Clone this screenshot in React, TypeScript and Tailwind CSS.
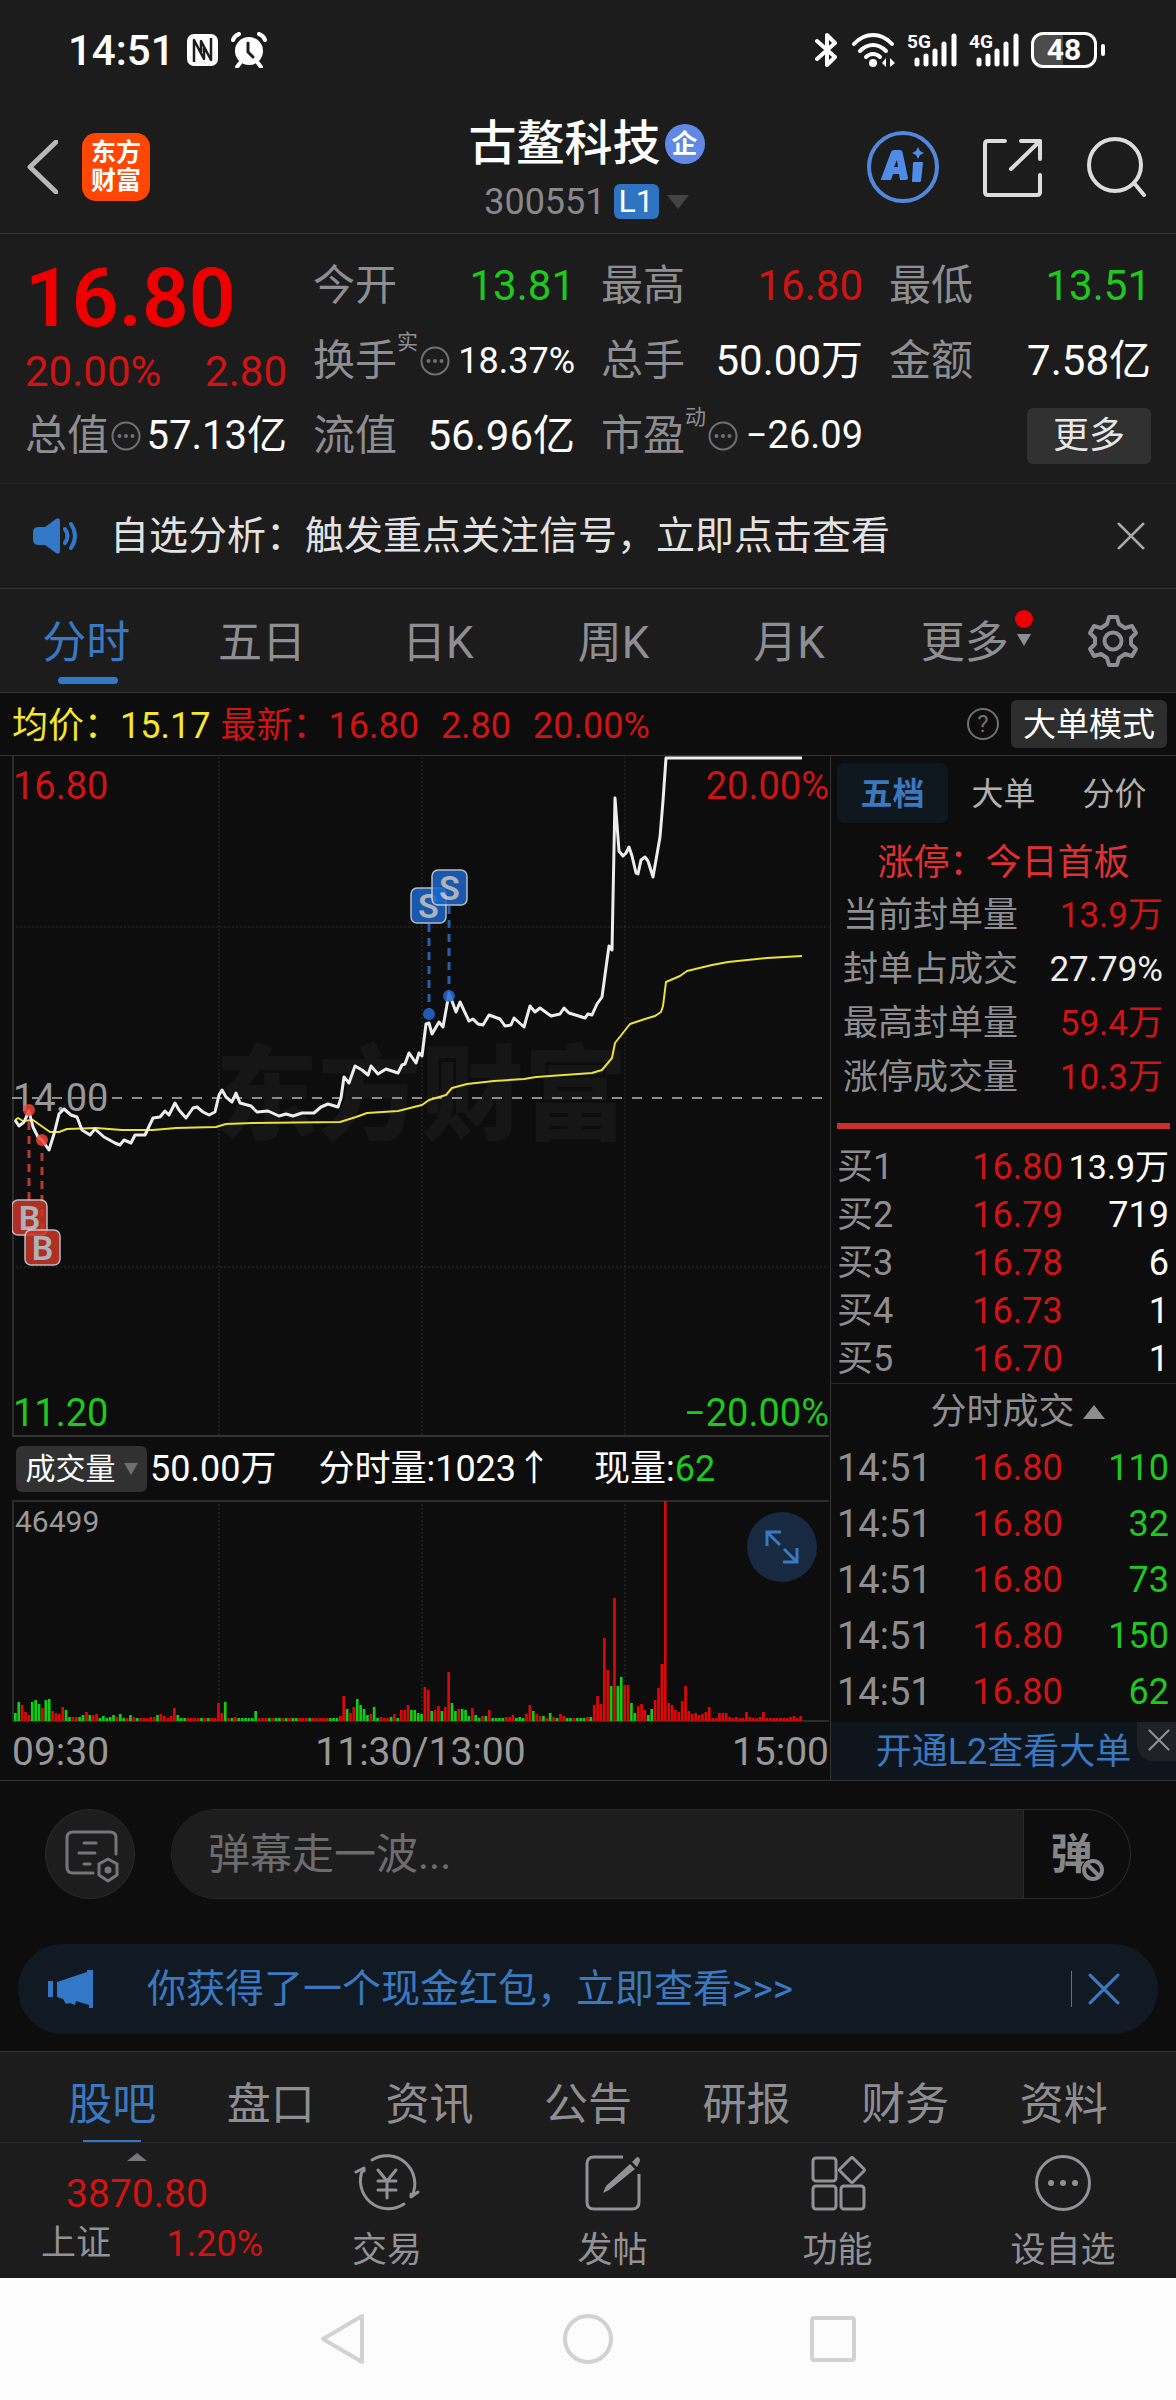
import type { ReactNode } from "react";

/* ---------- data ---------- */

const pricePoints =
  "15,1119 19,1125 24,1121 29,1110 33,1126 38,1136 42,1139 49,1149 54,1133 59,1113 64,1108 71,1114 77,1116 82,1129 90,1134 95,1128 104,1136 115,1142 120,1144 124,1139 131,1142 135,1134 145,1134 153,1117 160,1116 165,1110 169,1114 175,1102 179,1109 186,1117 193,1107 197,1106 203,1111 209,1114 215,1111 219,1094 222,1089 226,1096 232,1101 236,1092 240,1102 251,1105 257,1111 268,1110 279,1115 286,1113 293,1115 302,1112 314,1112 321,1106 328,1103 338,1106 341,1097 344,1076 349,1082 355,1065 362,1069 368,1074 371,1065 378,1073 386,1068 398,1072 402,1064 405,1063 409,1052 416,1062 419,1052 422,1055 426,1023 429,1022 432,1033 439,1021 443,1026 448,998 449,992 456,1011 460,1001 469,1020 473,1018 478,1023 483,1024 489,1014 500,1018 505,1025 511,1024 514,1017 524,1026 530,1005 535,1011 540,1007 551,1015 560,1013 564,1007 569,1012 585,1017 588,1013 592,1014 597,1003 602,996 605,974 609,945 612,949 615,797 619,850 623,855 626,852 629,846 632,855 636,872 638,873 641,859 645,856 648,860 653,876 656,859 660,836 663,800 666,757 802,757";

const averagePoints =
  "15,1119 18,1117 23,1120 33,1119 40,1124 50,1131 59,1131 67,1128 96,1127 122,1129 153,1129 176,1127 216,1126 226,1123 253,1122 340,1121 356,1116 367,1112 398,1110 422,1104 429,1099 446,1094 452,1087 467,1083 494,1080 524,1078 536,1076 592,1072 602,1069 612,1057 615,1042 630,1023 645,1018 655,1015 661,1011 663,1005 666,981 680,975 687,970 712,964 728,961 767,957 802,955";

/* One entry per minute: r = up, g = down, number = bar height. */
const volumeBars =
  "g8 g19 r16 r9 r6 g19 g21 g17 r13 g21 g22 r10 r8 r7 r14 g11 g4 r4 r4 g4 g6 r9 g6 r6 r7 g3 g5 g3 g4 g6 r4 g7 g3 r3 g6 r4 g3 r3 r3 r3 r4 r4 g6 r7 r5 r3 r5 r13 g6 g3 g3 r3 r3 r3 r3 g3 r3 g3 r3 r3 r18 r8 g19 r3 g3 r4 g3 g3 g3 g3 g3 g10 r3 r3 r3 g3 r3 g3 g3 r3 g3 r3 g3 g3 r3 r3 r3 g3 r3 r3 r3 r3 r3 g3 g3 g3 r5 r25 g12 r8 r14 g22 g16 g12 g6 r7 g14 g3 r4 r3 r3 g4 r7 g3 r11 r11 r16 g11 g11 g8 g7 r34 r31 g10 r11 r15 g10 r14 r49 g18 g10 r12 g12 g11 g5 r13 g6 g3 r5 g5 r11 g3 g3 g3 g3 r4 r4 r6 g3 g4 g3 r7 r16 g10 r7 r5 g5 r3 g8 r4 g3 r7 r5 g3 g3 r3 g3 g3 g3 r4 g4 r16 r25 r17 r83 r51 g35 r123 g35 g44 r36 r36 g18 g8 r15 r17 r11 g6 g12 r21 r33 r57 r220 r18 r16 r11 r9 r20 r35 r10 r7 r8 r6 r7 r9 r14 r3 r3 r8 r8 r8 r4 r3 r4 r3 r3 r9 r4 r3 r3 r4 r9 r3 r3 r3 r3 r3 r3 r3 r4 r5 r3 r5"
    .split(" ")
    .map((s) => ({ up: s[0] === "r", h: Number(s.slice(1)) }));

const periods = ["分时", "五日", "日K", "周K", "月K"];

const limitStats = [
  { label: "当前封单量", value: "13.9万", red: true },
  { label: "封单占成交", value: "27.79%", red: false },
  { label: "最高封单量", value: "59.4万", red: true },
  { label: "涨停成交量", value: "10.3万", red: true },
];

const bids = [
  ["买1", "16.80", "13.9万"],
  ["买2", "16.79", "719"],
  ["买3", "16.78", "6"],
  ["买4", "16.73", "1"],
  ["买5", "16.70", "1"],
];

const trades = ["110", "32", "73", "150", "62"];

const sections = ["股吧", "盘口", "资讯", "公告", "研报", "财务", "资料"];

/* ---------- icons ---------- */

function NfcIcon() {
  return (
    <svg className="h-8 w-8" viewBox="0 0 32 32" aria-hidden="true">
      <rect x="0" y="0" width="31" height="32" rx="7" fill="#fff" />
      <path d="M7 28V6l10 19V14M24 4v22L14 7v11" fill="none" stroke="#1c1c1c" strokeWidth="2.500" strokeLinejoin="round" />
    </svg>
  );
}

function AlarmIcon() {
  return (
    <svg className="h-9 w-9" viewBox="0 0 36 36" aria-hidden="true">
      <circle cx="18" cy="19" r="14" fill="#fff" />
      <path d="M9 31l-3 4M27 31l3 4M2 8c1-3 3-5 6-6M34 8c-1-3-3-5-6-6" stroke="#fff" strokeWidth="4" strokeLinecap="round" fill="none" />
      <path d="M17 11v9l5 5" stroke="#1c1c1c" strokeWidth="3" fill="none" strokeLinecap="round" />
    </svg>
  );
}

function BluetoothIcon() {
  return (
    <svg className="h-9 w-6" viewBox="0 0 24 36" aria-hidden="true">
      <path d="M2 9l18 16-8 8V3l8 8L2 27" fill="none" stroke="#fff" strokeWidth="4" strokeLinejoin="round" strokeLinecap="round" />
    </svg>
  );
}

function WifiIcon() {
  return (
    <svg className="h-9 w-12" viewBox="0 0 48 36" aria-hidden="true">
      <g fill="none" stroke="#fff" strokeWidth="4" strokeLinecap="round">
        <path d="M3 12C14 0 30 0 41 12" />
        <path d="M9 19c8-8 18-8 26 0" />
        <path d="M15 25c4-4 10-4 14 0" />
      </g>
      <circle cx="22" cy="31" r="4" fill="#fff" />
      <path d="M35 26v9l-4-4zM39 35v-9l5 5z" fill="#fff" />
    </svg>
  );
}

function SignalIcon({ label }: { label: string }) {
  return (
    <div className="relative h-9 w-[50px]">
      <svg className="h-9 w-[50px]" viewBox="0 0 50 36" aria-hidden="true">
        <path d="M10 28v4M19 24v8M28 19v13M37 12v20M47 4v28" stroke="#fff" strokeWidth="5" strokeLinecap="round" />
      </svg>
      <span className="absolute top-0 left-0 text-[19px] leading-5 font-bold">{label}</span>
    </div>
  );
}

function SearchIcon() {
  return (
    <svg className="h-[60px] w-[60px]" viewBox="0 0 60 60" fill="none" stroke="#dcdcdc" strokeWidth="4" strokeLinecap="round" aria-hidden="true">
      <circle cx="28" cy="28" r="26" />
      <path d="M47 46l10 12" />
    </svg>
  );
}

function ShareIcon() {
  return (
    <svg className="h-[60px] w-[60px]" viewBox="0 0 60 60" fill="none" stroke="#dcdcdc" strokeWidth="4" strokeLinecap="round" strokeLinejoin="round" aria-hidden="true">
      <path d="M22 4H5q-3 0-3 3v48q0 3 3 3h49q3 0 3-3V38" />
      <path d="M38 4h19v18M57 4L28 32" />
    </svg>
  );
}

function AiIcon() {
  return (
    <svg className="h-[72px] w-[72px]" viewBox="0 0 72 72" aria-hidden="true">
      <circle cx="36" cy="36" r="34" fill="none" stroke="#5288dc" strokeWidth="4" />
      <path fillRule="evenodd" d="M14 48L24 21q1-2 3-2h6q2 0 2.500 2L41 47q0 2-2 2h-6l-1-6h-6l-2 6h-8q-3 0-2-1zM27 36h4l-1-7z" fill="#4f8ce8" />
      <path d="M47 31h8q1 0 1 1l-2 18q0 1-1 1h-7q-1 0-1-1l1-18q0-1 1-1zM51 16l2 4 4 2-4 2-2 4-2-4-4-2 4-2z" fill="#4f8ce8" />
    </svg>
  );
}

function EllipsisCircle() {
  return (
    <svg className="ml-[2px] h-[30px] w-[30px] shrink-0" viewBox="0 0 30 30" aria-hidden="true">
      <circle cx="15" cy="15" r="13.500" fill="none" stroke="#707074" strokeWidth="2" />
      <g fill="#707074">
        <circle cx="8.500" cy="15" r="2" />
        <circle cx="15" cy="15" r="2" />
        <circle cx="21.500" cy="15" r="2" />
      </g>
    </svg>
  );
}

function SpeakerIcon() {
  return (
    <svg className="h-9 w-[46px]" viewBox="0 0 46 36" aria-hidden="true">
      <path d="M7 9h6L24 1q4-2 4 2v30q0 4-4 2L13 27H7q-6 0-6-5v-8q0-5 6-5z" fill="#3377c8" />
      <path d="M33 11q5 7 0 14M39 6q8 12 0 24" fill="none" stroke="#3377c8" strokeWidth="4" strokeLinecap="round" />
    </svg>
  );
}

function CrossIcon({ className }: { className: string }) {
  return (
    <svg className={className} viewBox="0 0 30 30" fill="none" stroke="currentColor" strokeWidth="3" strokeLinecap="round" aria-hidden="true">
      <path d="M2 2l26 26M28 2L2 28" />
    </svg>
  );
}

function GearIcon() {
  return (
    <svg className="h-[52px] w-[52px]" viewBox="0 0 52 52" fill="none" stroke="#8e8e92" strokeWidth="4" strokeLinejoin="round" aria-hidden="true">
      <path d="M22 2h8l2 7 6 4 7-2 4 7-5 5v6l5 5-4 7-7-2-6 4-2 7h-8l-2-7-6-4-7 2-4-7 5-5v-6l-5-5 4-7 7 2 6-4z" />
      <circle cx="26" cy="26" r="8.500" />
    </svg>
  );
}

function DocGearIcon() {
  return (
    <svg className="h-[54px] w-[54px]" viewBox="0 0 54 54" fill="none" stroke="#76767a" strokeWidth="3" strokeLinecap="round" strokeLinejoin="round" aria-hidden="true">
      <path d="M28 44H8q-6 0-6-6V9q0-6 6-6h37q6 0 6 6v16" />
      <path d="M19 14h12M14 24h16M19 35h6" />
      <path d="M43 30l9 5v11l-9 6-9-6V35z" />
      <circle cx="43" cy="41" r="2" fill="#76767a" />
    </svg>
  );
}

function MegaphoneIcon() {
  return (
    <svg className="h-10 w-[46px]" viewBox="0 0 46 40" fill="#3377c8" aria-hidden="true">
      <path d="M0 12h5v16H0zM9 13L39 3V1h6v38h-4v-3l-13-4-1 4-5-2-4 1-3-5-6-2z" />
    </svg>
  );
}

function TradeIcon() {
  return (
    <svg className="h-[60px] w-[66px]" viewBox="0 0 66 60" fill="none" stroke="#929296" strokeWidth="3" strokeLinecap="round" strokeLinejoin="round" aria-hidden="true">
      <path d="M18 7A28 28 0 0 1 58 43M50 51A28 28 0 0 1 9 16" />
      <path d="M2 19l8-4v3M64 39l-7 5v-3" />
      <path d="M24 17l9 11 9-11M33 28v17M24 28h18M24 37h18" />
    </svg>
  );
}

function PostIcon() {
  return (
    <svg className="h-[60px] w-[60px]" viewBox="0 0 60 60" aria-hidden="true">
      <path d="M40 4H11q-7 0-7 7v38q0 7 7 7h38q7 0 7-7V21" fill="none" stroke="#929296" strokeWidth="3" />
      <path d="M47 11l5 5-26 21-6 3 3-7zM49 9l5-5q3 0 3 4l-3 6z" fill="#929296" />
    </svg>
  );
}

function FunctionIcon() {
  return (
    <svg className="h-[60px] w-[60px]" viewBox="0 0 60 60" fill="none" stroke="#929296" strokeWidth="3" strokeLinejoin="round" aria-hidden="true">
      <rect x="5" y="5" width="23" height="23" rx="3" />
      <rect x="5" y="33" width="23" height="23" rx="3" />
      <rect x="33" y="33" width="23" height="23" rx="3" />
      <path d="M43 5q1-1 2 0l11 11q1 1 0 2L45 29q-1 1-2 0L32 18q-1-1 0-2z" />
    </svg>
  );
}

function MoreIcon() {
  return (
    <svg className="h-[60px] w-[60px]" viewBox="0 0 60 60" aria-hidden="true">
      <circle cx="30" cy="30" r="26.500" fill="none" stroke="#929296" strokeWidth="3" />
      <g fill="#929296">
        <circle cx="18" cy="30" r="3" />
        <circle cx="30" cy="30" r="3" />
        <circle cx="42" cy="30" r="3" />
      </g>
    </svg>
  );
}

/* ---------- page parts ---------- */

function StatusBar() {
  return (
    <div className="flex h-[100px] items-center justify-between pr-[71px] pl-[68px] text-white">
      <div className="flex items-center gap-3">
        <span className="text-[42px] font-medium">14:51</span>
        <NfcIcon />
        <AlarmIcon />
      </div>
      <div className="flex items-center gap-3">
        <BluetoothIcon />
        <div className="-mr-1">
          <WifiIcon />
        </div>
        <SignalIcon label="5G" />
        <SignalIcon label="4G" />
        <div className="flex items-center gap-1">
          <div className="flex h-9 w-[66px] items-center justify-center rounded-[12px] border-[3px] border-white bg-linear-to-r from-[#4c4c4c] from-48% to-transparent to-48% text-[30px] leading-none font-bold">
            48
          </div>
          <div className="h-3 w-1 rounded-full bg-white" />
        </div>
      </div>
    </div>
  );
}

function TitleBar() {
  return (
    <header className="grid h-[134px] grid-cols-[1fr_auto_1fr] items-center border-b border-[#333] pr-[29px] pl-[26px]">
      <div className="flex items-center gap-6">
        <button aria-label="返回">
          <svg className="h-[54px] w-8" viewBox="0 0 32 54" fill="none" stroke="#b8b8b8" strokeWidth="5" strokeLinecap="round" strokeLinejoin="round">
            <path d="M30 2L4 27l26 25" />
          </svg>
        </button>
        <div className="flex h-[68px] w-[68px] flex-col items-center justify-center rounded-[14px] bg-[#ff4603] text-[25px] leading-7 font-bold text-white">
          <span>东方</span>
          <span>财富</span>
        </div>
      </div>
      <div className="flex flex-col items-center pt-[6px]">
        <h1 className="flex items-center gap-1 text-[48px] leading-[64px] font-medium text-white">
          古鳌科技
          <span className="flex h-10 w-10 items-center justify-center rounded-full bg-[#6088e4] text-[26px] leading-none font-bold">企</span>
        </h1>
        <button className="flex items-center gap-2 text-[36px] leading-[52px] text-[#88888c]">
          300551
          <span className="rounded-md bg-[#2e74c2] px-[5px] text-[32px] leading-[35px] text-white">L1</span>
          <svg className="h-[14px] w-[22px]" viewBox="0 0 22 14" fill="#444" aria-hidden="true">
            <path d="M0 0h22L11 14z" />
          </svg>
        </button>
      </div>
      <div className="flex items-center justify-end gap-11">
        <button aria-label="智能助手">
          <AiIcon />
        </button>
        <button aria-label="分享">
          <ShareIcon />
        </button>
        <button aria-label="搜索">
          <SearchIcon />
        </button>
      </div>
    </header>
  );
}

function Quote({
  label,
  sup,
  info,
  value,
  size = "text-[42px]",
  tone = "text-white",
}: {
  label: string;
  sup?: string;
  info?: boolean;
  value: string;
  size?: string;
  tone?: string;
}) {
  return (
    <div className="flex h-[75px] items-center justify-between whitespace-nowrap">
      <span className="flex items-center text-[42px] text-[#8e8e92]">
        {label}
        {sup && <span className="mb-9 text-[21px] leading-none">{sup}</span>}
        {info && <EllipsisCircle />}
      </span>
      <span className={`${tone} ${size}`}>{value}</span>
    </div>
  );
}

function QuotePanel() {
  return (
    <section className="grid grid-cols-4 gap-x-[26px] border-b border-[#272727] px-[25px] pt-[14px] pb-[10px]">
      <div>
        <div className="flex h-[96px] items-center pt-1 text-[82px] leading-none font-semibold text-[#ee0000]">16.80</div>
        <div className="flex h-[54px] items-center justify-between text-[42px] text-[#d01414]">
          <span>20.00%</span>
          <span>2.80</span>
        </div>
        <Quote label="总值" info value="57.13亿" size="text-[40px]" />
      </div>
      <div>
        <Quote label="今开" value="13.81" tone="text-[#1ec81e]" />
        <Quote label="换手" sup="实" info value="18.37%" size="text-[36px]" />
        <Quote label="流值" value="56.96亿" />
      </div>
      <div>
        <Quote label="最高" value="16.80" tone="text-[#d01414]" />
        <Quote label="总手" value="50.00万" />
        <Quote label="市盈" sup="动" info value="−26.09" size="text-[38px]" />
      </div>
      <div>
        <Quote label="最低" value="13.51" tone="text-[#1ec81e]" />
        <Quote label="金额" value="7.58亿" />
        <div className="flex h-[75px] items-center justify-end">
          <button className="h-14 w-[124px] rounded-md bg-[#313131] text-[36px] leading-none text-[#e6e6e6]">更多</button>
        </div>
      </div>
    </section>
  );
}

function Notice() {
  return (
    <section className="flex h-[105px] items-center border-b border-[#333] pr-[31px] pl-8">
      <SpeakerIcon />
      <p className="ml-8 flex-1 text-[39px] whitespace-nowrap text-[#e2e2e2]">自选分析：触发重点关注信号，立即点击查看</p>
      <button aria-label="关闭提示" className="text-[#a8a8a8]">
        <CrossIcon className="h-[28px] w-[28px]" />
      </button>
    </section>
  );
}

function PeriodTabs() {
  return (
    <nav className="flex h-[104px] items-stretch border-b border-[#333] pr-1 text-[44px] text-[#8e8e92]">
      {periods.map((p, i) => (
        <button
          key={p}
          className={
            i === 0
              ? "relative flex-[176] pt-1 pr-[3px] text-[#3a78c0] after:absolute after:bottom-2 after:left-1/2 after:h-[7px] after:w-[60px] after:-translate-x-1/2 after:rounded-full after:bg-[#3377c8]"
              : "flex-[176] pt-1 pr-[3px]"
          }
        >
          {p}
        </button>
      ))}
      <button className="flex flex-[176] items-center justify-center pt-1 pr-[3px]">
        <span className="relative">
          更多
          <span className="absolute top-0 -right-6 h-[18px] w-[18px] rounded-full bg-[#ee0000]" />
          <svg className="absolute top-6 -right-[22px] h-3 w-[14px]" viewBox="0 0 14 12" fill="#8e8e92" aria-hidden="true">
            <path d="M0 0h14L7 12z" />
          </svg>
        </span>
      </button>
      <button aria-label="设置" className="flex flex-[120] items-center justify-center">
        <GearIcon />
      </button>
    </nav>
  );
}

function ChartInfo() {
  return (
    <div className="flex h-[63px] items-center justify-between border-b border-[#333] pr-[9px] pl-3 text-[36px] whitespace-nowrap">
      <div className="flex pt-[3px]">
        <span className="mr-[10px] text-[#f5e62e]">均价：15.17</span>
        <span className="mr-[22px] text-[#d01414]">最新：16.80</span>
        <span className="mr-[22px] text-[#d01414]">2.80</span>
        <span className="text-[#d01414]">20.00%</span>
      </div>
      <div className="flex items-center gap-3">
        <button aria-label="帮助" className="flex h-8 w-8 items-center justify-center rounded-full border-2 border-[#707074] text-2xl leading-none text-[#707074]">
          ?
        </button>
        <button className="h-12 rounded-md bg-[#2e2e2e] px-3 text-[33px] leading-none text-white">大单模式</button>
      </div>
    </div>
  );
}

function Marker({ x, y, letter, fill }: { x: number; y: number; letter: string; fill: string }) {
  return (
    <g opacity="0.85">
      <rect x={x} y={y} width="35" height="35" rx="6" fill={fill} stroke="#d8d8e0" strokeWidth="1.500" />
      <text x={x + 17.5} y={y + 30} fontSize="34" fontWeight="600" textAnchor="middle" fill="#ccd0d8">
        {letter}
      </text>
    </g>
  );
}

function PriceChart() {
  return (
    <div className="relative pl-3">
      <div className="absolute inset-0 flex items-center justify-center pl-3 text-[103px] leading-none font-black text-[#161616]">
        <span>东方财富</span>
      </div>
      <svg className="relative block h-auto w-full" viewBox="12 755 818 681" role="img" aria-label="分时走势图">
        <g stroke="#2c2c2c" strokeWidth="1" strokeDasharray="2 2">
          <path d="M12 926H829M12 1266H829M219 756V1436M422 756V1436M625 756V1436" />
        </g>
        <path d="M13 755V1436" stroke="#2c2c2c" strokeWidth="2" />
        <path d="M12 1435H829" stroke="#333" strokeWidth="2" />
        <text x="13" y="1110" fontSize="38" fill="#98989a">14.00</text>
        <path d="M12 1097H829" stroke="#8c8c8c" strokeWidth="2" strokeDasharray="10 10" />
        <polyline points={averagePoints} fill="none" stroke="#ece03a" strokeWidth="2" strokeLinejoin="round" />
        <polyline points={pricePoints} fill="none" stroke="#ededed" strokeWidth="3" strokeLinejoin="round" />
        <g strokeWidth="3" strokeDasharray="8 6">
          <path d="M429 923V1008M449 905V990" stroke="#2560ac" />
          <path d="M29 1121V1199M42 1152V1229" stroke="#b53a30" />
        </g>
        <g fill="#2468d0" opacity="0.85">
          <circle cx="429" cy="1013" r="6" />
          <circle cx="449" cy="995" r="6" />
        </g>
        <g fill="#ee4436" opacity="0.85">
          <circle cx="29" cy="1109" r="6" />
          <circle cx="42" cy="1139" r="6" />
        </g>
        <Marker x={411} y={887} letter="S" fill="#1a66cc" />
        <Marker x={432} y={869} letter="S" fill="#1a66cc" />
        <Marker x={12} y={1199} letter="B" fill="#cc3628" />
        <Marker x={25} y={1229} letter="B" fill="#cc3628" />
        <g fontSize="38">
          <text x="13" y="798" fill="#d01414">16.80</text>
          <text x="829" y="798" textAnchor="end" fill="#d01414">20.00%</text>
          <text x="13" y="1425" fill="#1ec81e">11.20</text>
          <text x="829" y="1425" textAnchor="end" fill="#1ec81e">−20.00%</text>
        </g>
      </svg>
    </div>
  );
}

function VolumeChart() {
  return (
    <>
      <div className="flex h-[63px] items-center pl-4 text-[36px] whitespace-nowrap text-white">
        <button className="flex h-[46px] w-[131px] items-center justify-center gap-2 rounded-md bg-[#313131] text-[30px] leading-none">
          成交量
          <svg className="h-3 w-[14px]" viewBox="0 0 14 12" fill="#6e6e6e" aria-hidden="true">
            <path d="M0 0h14L7 12z" />
          </svg>
        </button>
        <span className="ml-[3px]">50.00万</span>
        <span className="ml-[42px]">分时量:1023↑</span>
        <span className="ml-[42px]">
          现量:<span className="text-[#1ec81e]">62</span>
        </span>
      </div>
      <div className="relative pl-3">
        <svg className="block h-auto w-full" viewBox="0 0 818 222" role="img" aria-label="成交量柱状图">
          <path d="M207 0V221M410 0V221M613 0V221" stroke="#2c2c2c" strokeWidth="1" strokeDasharray="2 2" />
          <path d="M1 222V1H817" fill="none" stroke="#2c2c2c" strokeWidth="2" />
          <path d="M0 221H817" stroke="#2c2c2c" strokeWidth="2" />
          {volumeBars.map((b, i) => (
            <rect key={i} x={2 + i * 3.385} y={221 - b.h} width="2.700" height={b.h} fill={b.up ? "#dc0808" : "#14cc14"} />
          ))}
          <text x="3" y="32" fontSize="30" fill="#98989a">46499</text>
        </svg>
        <button aria-label="全屏" className="absolute top-3 right-[13px] flex h-[70px] w-[70px] items-center justify-center rounded-full bg-[#172a41]">
          <svg className="h-[38px] w-[38px]" viewBox="0 0 38 38" fill="none" stroke="#3a78c0" strokeWidth="3" aria-hidden="true">
            <path d="M4 18V4h14M4 4l13 13M34 20v14H20M34 34L21 21" />
          </svg>
        </button>
      </div>
      <div className="flex h-[58px] items-center justify-between pt-[3px] pr-px pl-3 text-[39px] text-[#98989a]">
        <span>09:30</span>
        <span>11:30/13:00</span>
        <span>15:00</span>
      </div>
    </>
  );
}

function OrderPanel() {
  return (
    <aside className="flex flex-col border-l border-[#333]">
      <div className="grid grid-cols-3 px-[6px] pt-[7px] text-[32px] text-[#b0b0b2]">
        <button className="h-[60px] rounded-lg bg-[#10181f] pt-[2px] font-bold text-[#3a78c0]">五档</button>
        <button className="pt-[2px]">大单</button>
        <button className="pt-[2px]">分价</button>
      </div>
      <p className="mt-[14px] text-center text-[36px] leading-[52px] text-[#e03030]">涨停：今日首板</p>
      <dl className="pr-[13px] pl-3 text-[35px] leading-[54px] text-[#8e8e92]">
        {limitStats.map((s) => (
          <div key={s.label} className="flex justify-between whitespace-nowrap">
            <dt>{s.label}</dt>
            <dd className={s.red ? "text-[#d01414]" : "text-[#ededed]"}>{s.value}</dd>
          </div>
        ))}
      </dl>
      <div className="mx-[6px] mt-[18px] mb-[14px] h-[6px] bg-[#c83030]" />
      <div className="border-b border-[#272727] pr-[7px] pl-[6px]">
        <table className="w-full table-fixed text-[36px] leading-[48px]">
          <tbody>
            {bids.map(([name, price, size]) => (
              <tr key={name}>
                <th scope="row" className="w-1/4 text-left font-normal text-[#8e8e92]">{name}</th>
                <td className="w-[43%] text-right text-[#d01414]">{price}</td>
                <td className={size.endsWith("万") ? "text-right text-[34px] whitespace-nowrap text-white" : "text-right text-white"}>{size}</td>
              </tr>
            ))}
          </tbody>
        </table>
      </div>
      <button className="flex h-[56px] items-center justify-center gap-2 pl-7 text-[36px] text-[#8e8e92]">
        分时成交
        <svg className="h-[14px] w-[22px]" viewBox="0 0 22 14" fill="#8e8e92" aria-hidden="true">
          <path d="M11 0l11 14H0z" />
        </svg>
      </button>
      <div className="pr-[7px] pl-[6px]">
        <table className="w-full table-fixed text-[36px] leading-[56px]">
          <tbody>
            {trades.map((size, i) => (
              <tr key={i}>
                <td className="w-[30%] text-[38px] text-[#8e8e92]">14:51</td>
                <td className="w-[38%] text-right text-[#d01414]">16.80</td>
                <td className="text-right text-[#1ec81e]">{size}</td>
              </tr>
            ))}
          </tbody>
        </table>
      </div>
      <div className="relative mt-auto flex h-[58px] items-center justify-center bg-[#0f151c] pt-[2px]">
        <a href="#level2" className="text-[36px] text-[#3a78c0]">开通L2查看大单</a>
        <button aria-label="关闭推广" className="absolute top-0 right-0 flex h-[39px] w-[39px] items-center justify-center rounded-bl-2xl bg-[#1e2226] pb-1 pl-1 text-[#8e8e92]">
          <CrossIcon className="h-[22px] w-[22px]" />
        </button>
      </div>
    </aside>
  );
}

function Danmaku() {
  return (
    <section className="flex items-center gap-9 pt-7 pr-[45px] pb-[45px] pl-[45px]">
      <button aria-label="弹幕设置" className="flex h-[90px] w-[90px] shrink-0 items-center justify-center rounded-full border border-[#2a2a2a] bg-[#1d1d1d] pt-1 pl-1">
        <DocGearIcon />
      </button>
      <div className="flex h-[90px] min-w-0 flex-1 overflow-hidden rounded-full border border-[#2a2a2a]">
        <input
          type="text"
          aria-label="弹幕"
          placeholder="弹幕走一波..."
          className="min-w-0 flex-1 bg-[#1d1d1d] pl-9 text-[42px] outline-none placeholder:text-[#6c6c6e]"
        />
        <button aria-label="关闭弹幕" className="relative w-[107px] border-l border-[#2a2a2a] pr-[11px] text-[42px] font-bold text-[#86868a]">
          弹
          <svg className="absolute right-[25px] bottom-4 h-6 w-6 rounded-full bg-[#0d0d0d]" viewBox="0 0 24 24" fill="none" stroke="#86868a" strokeWidth="4" aria-hidden="true">
            <circle cx="12" cy="12" r="9" />
            <path d="M6 6l12 12" />
          </svg>
        </button>
      </div>
    </section>
  );
}

function Promo() {
  return (
    <section className="mx-[18px] mb-[17px] flex h-[90px] items-center rounded-full bg-[#111a22] pr-[38px] pl-[30px] text-[#3a78c0]">
      <MegaphoneIcon />
      <a href="#bonus" className="ml-[53px] flex-1 text-[39px] whitespace-nowrap">你获得了一个现金红包，立即查看&gt;&gt;&gt;</a>
      <div className="mr-4 h-9 w-px bg-[#3a78c0]" />
      <button aria-label="关闭活动">
        <CrossIcon className="h-8 w-8" />
      </button>
    </section>
  );
}

function SectionTabs() {
  return (
    <nav className="grid h-[92px] grid-cols-7 border-y border-t-[#333] border-b-[#272727] bg-[#1c1c1c] px-[33px] text-[44px] text-[#8e8e92]">
      {sections.map((s, i) => (
        <button
          key={s}
          className={
            i === 0
              ? "relative pt-4 text-[#3a78c0] after:absolute after:bottom-0 after:left-1/2 after:h-[2px] after:w-[58px] after:-translate-x-1/2 after:bg-[#3377c8]"
              : "pt-4"
          }
        >
          {s}
        </button>
      ))}
    </nav>
  );
}

function BarItem({ icon, label }: { icon: ReactNode; label: string }) {
  return (
    <button className="flex flex-col items-center gap-3">
      {icon}
      <span className="text-[35px] leading-[52px]">{label}</span>
    </button>
  );
}

function BottomBar() {
  return (
    <div className="grid h-[135px] grid-cols-[274fr_226fr_225fr_225fr_226fr] bg-[#1c1c1c] pt-[10px] text-[#929296]">
      <div className="flex flex-col items-center">
        <svg className="h-2 w-5" viewBox="0 0 20 8" fill="#77777b" aria-hidden="true">
          <path d="M10 0l10 8H0z" />
        </svg>
        <span className="mt-[6px] text-[39px] leading-[54px] text-[#d01414]">3870.80</span>
        <span className="flex w-full justify-between pr-[11px] pl-[41px] text-[35px] leading-[46px]">
          上证 <span className="text-[36px] text-[#d01414]">1.20%</span>
        </span>
      </div>
      <BarItem icon={<TradeIcon />} label="交易" />
      <BarItem icon={<PostIcon />} label="发帖" />
      <BarItem icon={<FunctionIcon />} label="功能" />
      <BarItem icon={<MoreIcon />} label="设自选" />
    </div>
  );
}

function SystemNav() {
  return (
    <div className="flex h-[122px] items-center justify-center gap-[197px] bg-[#fcfcfc]">
      <button aria-label="系统返回">
        <svg className="h-[50px] w-[46px]" viewBox="0 0 46 50" fill="none" stroke="#d2d2d2" strokeWidth="4" strokeLinejoin="round">
          <path d="M42 2v46L3 25z" />
        </svg>
      </button>
      <button aria-label="主屏幕">
        <svg className="h-[50px] w-[50px]" viewBox="0 0 50 50" fill="none" stroke="#d2d2d2" strokeWidth="4">
          <circle cx="25" cy="25" r="23" />
        </svg>
      </button>
      <button aria-label="最近任务">
        <svg className="h-[46px] w-[46px]" viewBox="0 0 46 46" fill="none" stroke="#d2d2d2" strokeWidth="4">
          <rect x="2" y="2" width="42" height="42" rx="2" />
        </svg>
      </button>
    </div>
  );
}

export default function App() {
  return (
    <div className="min-h-screen bg-[#0d0d0d] font-['Roboto','Noto_Sans_CJK_SC',sans-serif]">
      <div className="bg-[#1c1c1c]">
        <StatusBar />
        <TitleBar />
        <QuotePanel />
        <Notice />
        <PeriodTabs />
      </div>
      <main>
        <ChartInfo />
        <div className="grid grid-cols-[830fr_346fr] border-b border-[#333]">
          <div>
            <PriceChart />
            <VolumeChart />
          </div>
          <OrderPanel />
        </div>
        <Danmaku />
        <Promo />
      </main>
      <SectionTabs />
      <BottomBar />
      <SystemNav />
    </div>
  );
}
